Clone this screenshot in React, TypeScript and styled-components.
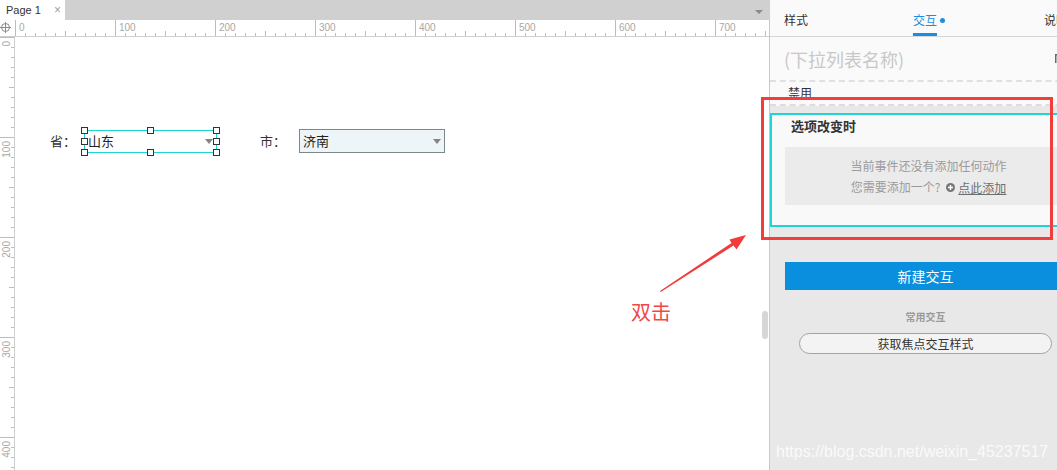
import React from 'react'
import styled, { createGlobalStyle } from 'styled-components'

const CJK = `'Noto Sans CJK SC', 'Liberation Sans', sans-serif`

const GlobalStyle = createGlobalStyle`
  html, body {
    margin: 0;
    padding: 0;
    background: #fff;
    overflow: hidden;
  }
  body {
    font-family: 'Liberation Sans', 'Noto Sans CJK SC', sans-serif;
  }
`

const Screen = styled.div`
  position: relative;
  display: flex;
  width: 1057px;
  height: 470px;
  overflow: hidden;
`

/* ---------- left: page canvas ---------- */

const Workspace = styled.div`
  display: flex;
  flex-direction: column;
  flex: none;
  width: 770px;
`

const TabStrip = styled.div`
  display: flex;
  height: 20px;
  background: #d0d0d0;
`

const PageTab = styled.div`
  display: flex;
  align-items: center;
  width: 65px;
  box-sizing: border-box;
  padding-left: 6px;
  background: #fff;
  font-size: 11px;
  color: #333;
`

const CloseMark = styled.span`
  margin-left: 13px;
  font-size: 12px;
  color: #a0a0a0;
`

const StripMenu = styled.span`
  margin: 10px 7px 0 auto;
  width: 0;
  height: 0;
  border-left: 4px solid transparent;
  border-right: 4px solid transparent;
  border-top: 4px solid #8a8a8a;
`

const Board = styled.div`
  flex: 1;
  display: grid;
  grid-template-columns: 15px 1fr;
  grid-template-rows: 17px 1fr;
  min-height: 0;
  border-right: 1px solid #c8c8c8;
`

const Corner = styled.div`
  box-sizing: border-box;
  padding-top: 1px;
  border-bottom: 1px solid #cfcfcf;
  background: #fff;
`

const HRuler = styled.div`
  display: flex;
  overflow: hidden;
  border-bottom: 1px solid #cfcfcf;
  background: #fff;
`

const HMark = styled.div`
  flex: none;
  width: 100px;
  box-sizing: border-box;
  padding: 2px 0 0 3px;
  border-left: 1px solid #bcbcbc;
  font-size: 10px;
  line-height: 11px;
  color: #a8a8a8;
  background:
    linear-gradient(to right, #bdbdbd 0 1px, transparent 1px) 0 100% / 10px 3px repeat-x,
    linear-gradient(#bdbdbd, #bdbdbd) 50px 100% / 1px 5px no-repeat;
  background-origin: border-box;
`

const VRuler = styled.div`
  display: flex;
  flex-direction: column;
  overflow: hidden;
  border-right: 1px solid #cfcfcf;
  background: #fff;
`

const VMark = styled.div`
  flex: none;
  height: 100px;
  box-sizing: border-box;
  padding: 3px 0 0 2px;
  border-top: 1px solid #bcbcbc;
  background:
    linear-gradient(to bottom, #bdbdbd 0 1px, transparent 1px) 100% 0 / 3px 10px repeat-y,
    linear-gradient(#bdbdbd, #bdbdbd) 100% 50px / 5px 1px no-repeat;
  background-origin: border-box;
`

const VLabel = styled.span`
  display: block;
  writing-mode: vertical-rl;
  transform: rotate(180deg);
  font-size: 10px;
  line-height: 10px;
  color: #a8a8a8;
`

const Canvas = styled.div`
  position: relative;
  overflow: hidden;
  background: #fff;
`

const FormRow = styled.div`
  position: absolute;
  left: 35px;
  top: 92px;
  display: flex;
  align-items: center;
  font-family: ${CJK};
`

const FieldLabel = styled.span<{ $gap?: number; $width: number }>`
  width: ${p => p.$width}px;
  margin-left: ${p => p.$gap ?? 0}px;
  padding-bottom: 2px;
  font-size: 13px;
  color: #333;
`

const Select = styled.div<{ $width: number; $selected?: boolean }>`
  position: relative;
  display: flex;
  align-items: center;
  width: ${p => p.$width}px;
  height: ${p => (p.$selected ? 23 : 24)}px;
  box-sizing: border-box;
  padding: 0 3px 2px;
  border: 1px solid ${p => (p.$selected ? '#1fd3d3' : '#7d8888')};
  background: ${p => (p.$selected ? '#fff' : '#eef5f8')};
  font-size: 13px;
  color: #222;
`

const Caret = styled.span`
  margin: 2px 0 0 auto;
  width: 0;
  height: 0;
  border-left: 4px solid transparent;
  border-right: 4px solid transparent;
  border-top: 5px solid #858585;
`

const Handle = styled.span<{ $x: number; $y: number }>`
  position: absolute;
  left: calc(${p => p.$x}% + ${p => p.$x / 100}px - 4px);
  top: calc(${p => p.$y}% + ${p => p.$y / 100}px - 4px);
  width: 7px;
  height: 7px;
  box-sizing: border-box;
  border: 1px solid #333;
  background: #fff;
`

const ScrollThumb = styled.div`
  position: absolute;
  right: 1px;
  top: 274px;
  width: 6px;
  height: 28px;
  border-radius: 3px;
  background: #d6d6d6;
`

/* ---------- right: inspector ---------- */

const Inspector = styled.aside`
  flex: none;
  width: 311px;
  display: flex;
  flex-direction: column;
  background: #e8e8e8;
  font-family: ${CJK};
  color: #333;
`

const InspectorTabs = styled.div`
  display: flex;
  height: 37px;
  box-sizing: border-box;
  padding-left: 14px;
  background: #fafafa;
  border-bottom: 1px solid #d6d6d6;
`

const InspectorTab = styled.div<{ $width: number }>`
  display: flex;
  align-items: flex-start;
  flex: none;
  width: ${p => p.$width}px;
  padding-top: 12px;
`

const TabText = styled.span<{ $active?: boolean }>`
  font-size: 12px;
  line-height: 16px;
  padding-bottom: 5px;
  color: ${p => (p.$active ? '#1a8ee0' : '#333')};
  border-bottom: 3px solid ${p => (p.$active ? '#1a8ee0' : 'transparent')};
`

const TabDot = styled.span`
  width: 5px;
  height: 5px;
  margin: 6px 0 0 3px;
  border-radius: 50%;
  background: #1a8ee0;
`

const NameRow = styled.div`
  display: flex;
  align-items: center;
  height: 43px;
  padding: 0 15px 0 14px;
  background: #fafafa;
  border-bottom: 2px dashed #e0e0e0;
  font-size: 18px;
  color: #c8c8c8;
`

const NameIcon = styled.svg`
  margin-left: auto;
`

const OptionRow = styled.div`
  height: 22px;
  padding-left: 18px;
  background: #fafafa;
  border-bottom: 2px dashed #dddddd;
  font-size: 12px;
  line-height: 22px;
`

const EventCard = styled.section`
  margin-top: 7px;
  padding: 0 7px 20px 13px;
  border: 2px solid #22d3d3;
  background: #f9f9f9;
`

const EventTitle = styled.div`
  padding-left: 6px;
  font-size: 13px;
  font-weight: 700;
  line-height: 21px;
  color: #333;
`

const EmptyActions = styled.div`
  margin-top: 11px;
  padding: 8px 0 7px;
  background: #ebebeb;
  text-align: center;
  font-size: 12px;
  line-height: 21px;
  color: #9b9b9b;
`

const AddLink = styled.span`
  display: inline-flex;
  align-items: center;
  gap: 3px;
  margin-left: 6px;
  color: #6e6e6e;
  text-decoration: underline;
`

const PrimaryButton = styled.button`
  margin: 35px 0 0 15px;
  width: 281px;
  height: 28px;
  padding: 0;
  border: 0;
  background: #0a8fdf;
  color: #fff;
  font-family: ${CJK};
  font-size: 14px;
`

const SectionLabel = styled.div`
  margin: 20px 0 0 15px;
  width: 281px;
  text-align: center;
  font-size: 10px;
  font-weight: 700;
  line-height: 14px;
  color: #9a9a9a;
`

const PillButton = styled.button`
  margin: 9px 0 0 29px;
  width: 253px;
  height: 21px;
  padding: 0;
  border: 1.5px solid #a3a3a3;
  border-radius: 11px;
  background: #f3f3f3;
  color: #333;
  font-family: ${CJK};
  font-size: 12px;
  line-height: 17px;
`

/* ---------- annotation overlay ---------- */

const Callout = styled.div`
  position: absolute;
  left: 761px;
  top: 97px;
  width: 292px;
  height: 143px;
  box-sizing: border-box;
  border: 3px solid #f33c3c;
  pointer-events: none;
`

const ArrowSvg = styled.svg`
  position: absolute;
  left: 655px;
  top: 228px;
`

const CalloutText = styled.div`
  position: absolute;
  left: 631px;
  top: 300px;
  font-family: ${CJK};
  font-size: 20px;
  line-height: 24px;
  color: #f04848;
`

const Watermark = styled.div`
  position: absolute;
  left: 776px;
  top: 441px;
  font-family: 'Liberation Sans', Arial, sans-serif;
  font-size: 16px;
  line-height: 22px;
  color: rgba(255, 255, 255, 0.8);
`

const hMarks = [0, 100, 200, 300, 400, 500, 600, 700]
const vMarks = [0, 100, 200, 300, 400]
const handles: [number, number][] = [
  [0, 0], [50, 0], [100, 0],
  [0, 50], [100, 50],
  [0, 100], [50, 100], [100, 100],
]

export default function App() {
  return (
    <Screen>
      <GlobalStyle />
      <Workspace>
        <TabStrip>
          <PageTab>
            Page 1<CloseMark>×</CloseMark>
          </PageTab>
          <StripMenu />
        </TabStrip>
        <Board>
          <Corner>
            <svg width="14" height="14" viewBox="0 0 14 14">
              <circle cx="5.5" cy="6.5" r="4" fill="none" stroke="#8c8c8c" strokeWidth="1" />
              <path d="M0 6.5H11M5.5 1V12" stroke="#8c8c8c" strokeWidth="1" />
            </svg>
          </Corner>
          <HRuler>
            {hMarks.map(m => (
              <HMark key={m}>{m}</HMark>
            ))}
          </HRuler>
          <VRuler>
            {vMarks.map(m => (
              <VMark key={m}>
                <VLabel>{m}</VLabel>
              </VMark>
            ))}
          </VRuler>
          <Canvas>
            <FormRow>
              <FieldLabel $width={34}>省：</FieldLabel>
              <Select $width={133} $selected>
                山东
                <Caret />
                {handles.map(([x, y]) => (
                  <Handle key={`${x}-${y}`} $x={x} $y={y} />
                ))}
              </Select>
              <FieldLabel $gap={43} $width={39}>市：</FieldLabel>
              <Select $width={146}>
                济南
                <Caret />
              </Select>
            </FormRow>
            <ScrollThumb />
          </Canvas>
        </Board>
      </Workspace>

      <Inspector>
        <InspectorTabs>
          <InspectorTab $width={129}>
            <TabText>样式</TabText>
          </InspectorTab>
          <InspectorTab $width={131}>
            <TabText $active>交互</TabText>
            <TabDot />
          </InspectorTab>
          <InspectorTab $width={40}>
            <TabText>说明</TabText>
          </InspectorTab>
        </InspectorTabs>
        <NameRow>
          (下拉列表名称)
          <NameIcon width="12" height="12" viewBox="0 0 12 12">
            <path d="M1 1h3v1.5H2.5V10H1z" fill="#6a6a6a" />
            <path d="M5 5h6v1.5H5z" fill="#6a6a6a" />
          </NameIcon>
        </NameRow>
        <OptionRow>禁用</OptionRow>
        <EventCard>
          <EventTitle>选项改变时</EventTitle>
          <EmptyActions>
            <div>当前事件还没有添加任何动作</div>
            <div>
              您需要添加一个?
              <AddLink>
                <svg width="9" height="9" viewBox="0 0 9 9">
                  <circle cx="4.5" cy="4.5" r="4.5" fill="#777" />
                  <path d="M4.5 2v5M2 4.5h5" stroke="#fff" strokeWidth="1.4" />
                </svg>
                点此添加
              </AddLink>
            </div>
          </EmptyActions>
        </EventCard>
        <PrimaryButton>新建交互</PrimaryButton>
        <SectionLabel>常用交互</SectionLabel>
        <PillButton>获取焦点交互样式</PillButton>
      </Inspector>

      <Callout />
      <ArrowSvg width="95" height="70" viewBox="0 0 95 70">
        <polygon
          points="5,63 76.5,15 74.5,11.5 91,7 81.5,21.5 78.5,17.5 5.8,64"
          fill="#f23c3c"
        />
      </ArrowSvg>
      <CalloutText>双击</CalloutText>
      <Watermark>https://blog.csdn.net/weixin_45237517</Watermark>
    </Screen>
  )
}
